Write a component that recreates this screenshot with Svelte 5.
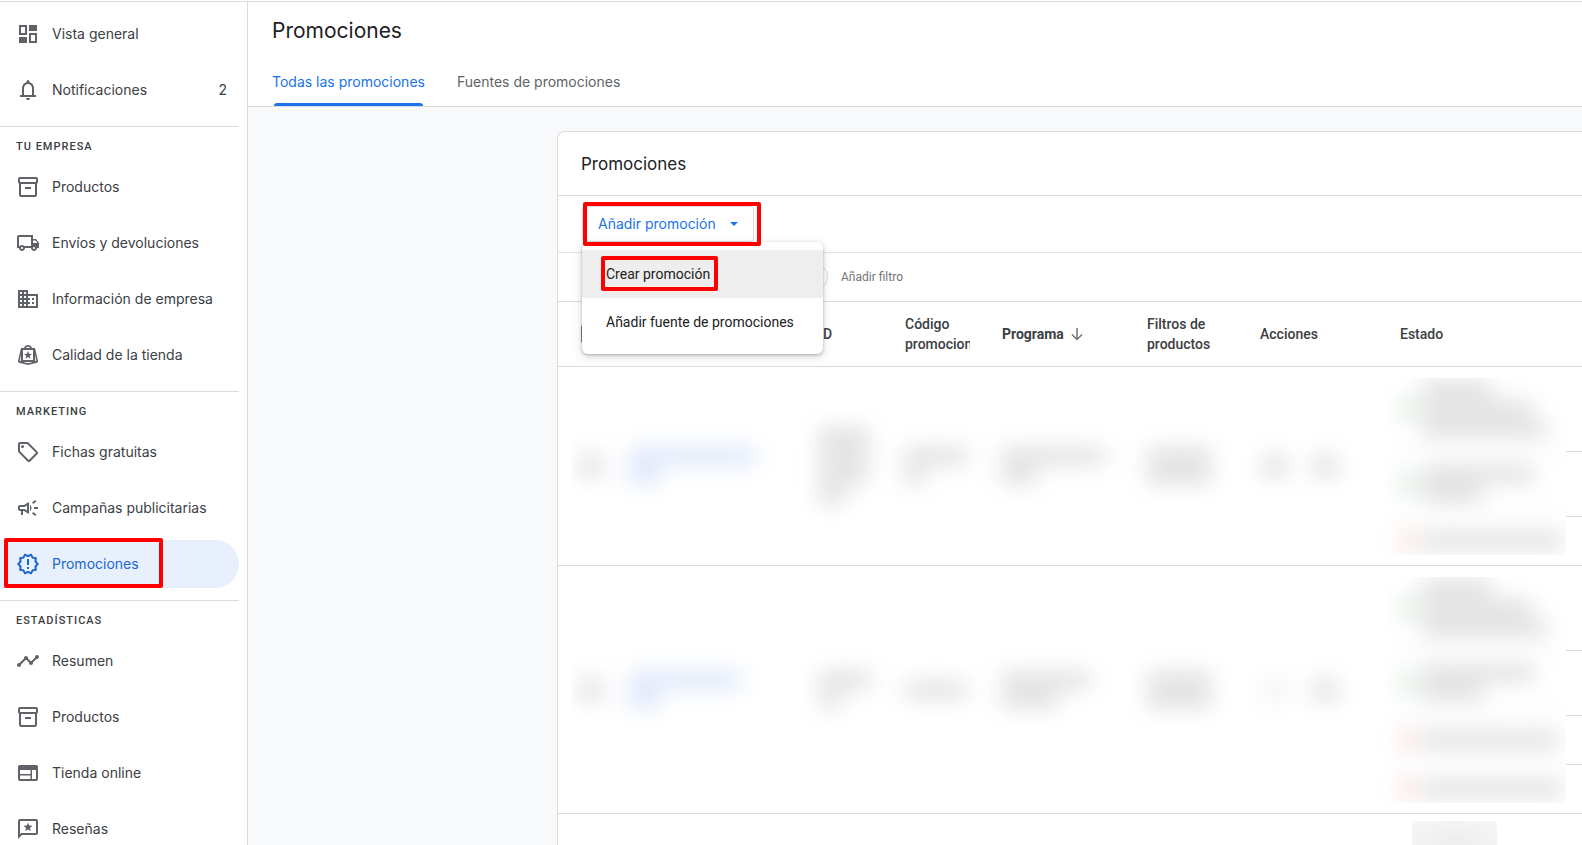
<script lang="ts">
	type NavItem = { icon: string; label: string; badge?: string; active?: boolean };
	type NavSection = { title?: string; items: NavItem[] };
	type Status = { tone: 'ok' | 'warn' | 'error'; lines: number[] };

	const icons: Record<string, string> = {
		dashboard: 'M3 3h8v10H3zM5 5v6h4V5zM13 3h8v6h-8zM3 15h8v6H3zM13 11h8v10h-8zM15 13v6h4v-6z',
		bell: 'M4 19v-2h2v-7q0-2.075 1.25-3.688T10.5 4.2v-.7q0-.625.438-1.063T12 2t1.063.438T13.5 3.5v.7q2 .5 3.25 2.113T18 10v7h2v2zm8 3q-.825 0-1.413-.588T10 20h4q0 .825-.588 1.413T12 22m-4-5h8v-7q0-1.65-1.175-2.825T12 6 9.175 7.175 8 10z',
		box: 'M20 2H4c-1 0-2 .9-2 2v3.01c0 .72.43 1.34 1 1.69V20c0 1.1 1.1 2 2 2h14c.9 0 2-.9 2-2V8.7c.57-.35 1-.97 1-1.69V4c0-1.1-1-2-2-2zm-1 18H5V9h14v11zm1-13H4V4h16v3zM9 12h6v2H9z',
		truck: 'M20 8h-3V4H3c-1.1 0-2 .9-2 2v11h2c0 1.66 1.34 3 3 3s3-1.34 3-3h6c0 1.66 1.34 3 3 3s3-1.34 3-3h2v-5l-3-4zM6 18c-.55 0-1-.45-1-1s.45-1 1-1 1 .45 1 1-.45 1-1 1zm9-3H8.22c-.55-.61-1.33-1-2.22-1s-1.67.39-2.22 1H3V6h12v9zm3 3c-.55 0-1-.45-1-1s.45-1 1-1 1 .45 1 1-.45 1-1 1zm-1-6V9.5h2.5l1.96 2.5H17z',
		building: 'M12 7V3H2v18h20V7H12zM6 19H4v-2h2v2zm0-4H4v-2h2v2zm0-4H4V9h2v2zm0-4H4V5h2v2zm4 12H8v-2h2v2zm0-4H8v-2h2v2zm0-4H8V9h2v2zm0-4H8V5h2v2zm10 12h-8v-2h2v-2h-2v-2h2v-2h-2V9h8v10zm-2-8h-2v2h2v-2zm0 4h-2v2h2v-2z',
		quality: 'M12 2a4 4 0 0 0-4 3H5L2 18q0 2 2 2l8 2 8-2q2 0 2-2L19 5h-3a4 4 0 0 0-4-3zm0 1.5a2 2 0 0 1 2 1.5h-4a2 2 0 0 1 2-1.5zM7 7h10v10H7zM12 8l1.1 2.7 2.9.2-2.2 1.9.7 2.9-2.5-1.6-2.5 1.6.7-2.9L8 10.9l2.9-.2zM5 11.5l-1.2 6.2 1.2.3zM19 11.5l1.2 6.2-1.2.3zM7 19h10l-5 1.3z',
		tag: 'M21.41 11.41l-8.83-8.83c-.37-.37-.88-.58-1.41-.58H4c-1.1 0-2 .9-2 2v7.17c0 .53.21 1.04.59 1.41l8.83 8.83c.78.78 2.05.78 2.83 0l7.17-7.17c.78-.78.78-2.04-.01-2.83zM12.83 20L4 11.17V4h7.17L20 12.83 12.83 20zM5 6.5a1.5 1.5 0 1 0 3 0a1.5 1.5 0 1 0-3 0z',
		campaign: 'M18 11v2h4v-2h-4zM16 17.61c.96.71 2.21 1.65 3.2 2.39.4-.53.8-1.07 1.2-1.6-.99-.74-2.24-1.68-3.2-2.4-.4.54-.8 1.08-1.2 1.61zM20.4 5.6c-.4-.53-.8-1.07-1.2-1.6-.99.74-2.24 1.68-3.2 2.4.4.53.8 1.07 1.2 1.6.96-.72 2.21-1.65 3.2-2.4zM4 9c-1.1 0-2 .9-2 2v2c0 1.1.9 2 2 2h1v4h2v-4h1l5 3V6L8 9H4zm5.03 1.71L11 9.53v4.94l-1.97-1.18-.48-.29H4v-2h4.55l.48-.29zM15.5 12c0-1.33-.58-2.53-1.5-3.35v6.69c.92-.81 1.5-2.01 1.5-3.34z',
		release: 'M23 12l-2.44-2.78.34-3.68-3.61-.82-1.89-3.18L12 3 8.6 1.54 6.71 4.72l-3.61.81.34 3.68L1 12l2.44 2.78-.34 3.69 3.61.82 1.89 3.18L12 21l3.4 1.46 1.89-3.18 3.61-.82-.34-3.68L23 12zm-4.51 2.11.26 2.79-2.74.62-1.43 2.41L12 18.82l-2.58 1.11-1.43-2.41-2.74-.62.26-2.8L3.66 12l1.85-2.12-.26-2.78 2.74-.61 1.43-2.41L12 5.18l2.58-1.11 1.43 2.41 2.74.62-.26 2.79L20.34 12l-1.85 2.11zM11 15h2v2h-2zm0-8h2v6h-2z',
		timeline: 'M23 8c0 1.1-.9 2-2 2-.18 0-.35-.02-.51-.07l-3.56 3.55c.05.16.07.34.07.52 0 1.1-.9 2-2 2s-2-.9-2-2c0-.18.02-.36.07-.52l-2.55-2.55c-.16.05-.34.07-.52.07s-.36-.02-.52-.07l-4.55 4.56c.05.16.07.33.07.51 0 1.1-.9 2-2 2s-2-.9-2-2 .9-2 2-2c.18 0 .35.02.51.07l4.56-4.55C8.02 9.36 8 9.18 8 9c0-1.1.9-2 2-2s2 .9 2 2c0 .18-.02.36-.07.52l2.55 2.55c.16-.05.34-.07.52-.07s.36.02.52.07l3.55-3.56C19.02 8.35 19 8.18 19 8c0-1.1.9-2 2-2s2 .9 2 2z',
		web: 'M20 4H4c-1.1 0-2 .9-2 2v12c0 1.1.9 2 2 2h16c1.1 0 2-.9 2-2V6c0-1.1-.9-2-2-2zM4 9h10.5v4H4zm0 5.5h10.5V18H4zM20 18h-4V9h4z',
		review: 'M20 2H4c-1.1 0-2 .9-2 2v18l4-4h14c1.1 0 2-.9 2-2V4c0-1.1-.9-2-2-2zm0 14H5.17L4 17.17V4h16v12zM12 5.5l1.2 3 3.3.3-2.5 2.1.8 3.2-2.8-1.7-2.8 1.7.8-3.2-2.5-2.1 3.3-.3z',
	};

	const sections: NavSection[] = [
		{
			items: [
				{ icon: 'dashboard', label: 'Vista general' },
				{ icon: 'bell', label: 'Notificaciones', badge: '2' },
			],
		},
		{
			title: 'Tu empresa',
			items: [
				{ icon: 'box', label: 'Productos' },
				{ icon: 'truck', label: 'Envíos y devoluciones' },
				{ icon: 'building', label: 'Información de empresa' },
				{ icon: 'quality', label: 'Calidad de la tienda' },
			],
		},
		{
			title: 'Marketing',
			items: [
				{ icon: 'tag', label: 'Fichas gratuitas' },
				{ icon: 'campaign', label: 'Campañas publicitarias' },
				{ icon: 'release', label: 'Promociones', active: true },
			],
		},
		{
			title: 'Estadísticas',
			items: [
				{ icon: 'timeline', label: 'Resumen' },
				{ icon: 'box', label: 'Productos' },
				{ icon: 'web', label: 'Tienda online' },
				{ icon: 'review', label: 'Reseñas' },
			],
		},
	];

	// Private data is never shown: each cell only knows how long its lines are
	const rows: { cells: number[][]; actions: string[]; statuses: Status[] }[] = [
		{
			cells: [[126, 30], [50, 50, 48, 26], [62, 20], [102, 34], [64, 64]],
			actions: ['strong', 'strong'],
			statuses: [
				{ tone: 'ok', lines: [70, 110, 124] },
				{ tone: 'ok', lines: [112, 60] },
				{ tone: 'warn', lines: [140] },
			],
		},
		{
			cells: [[112, 30], [52, 22], [62], [88, 56], [64, 64]],
			actions: ['faint', 'strong'],
			statuses: [
				{ tone: 'ok', lines: [70, 110, 124] },
				{ tone: 'ok', lines: [112, 60] },
				{ tone: 'error', lines: [136] },
				{ tone: 'error', lines: [140] },
			],
		},
	];

	let menuOpen = $state(true);
</script>

{#snippet icon(name: string)}
	<svg class="icon" viewBox="0 0 24 24" aria-hidden="true">
		<path fill-rule="evenodd" d={icons[name]} />
	</svg>
{/snippet}

{#snippet statusList(statuses: Status[])}
	{#each statuses as s}
		<div class="status">
			<b class={s.tone}></b>
			<div class="lines">{#each s.lines as w}<i style="width: {w}px"></i>{/each}</div>
		</div>
	{/each}
{/snippet}

<div class="app">
	<nav class="sidebar">
		{#each sections as section}
			<div class="section">
				{#if section.title}
					<h2 class="section-title">{section.title}</h2>
				{/if}
				{#each section.items as item}
					<a href="#top" class="nav-item" class:active={item.active}>
						{@render icon(item.icon)}
						<span class="nav-label">{item.label}</span>
						{#if item.badge}<span>{item.badge}</span>{/if}
						{#if item.active}<span class="mark mark-nav"></span>{/if}
					</a>
				{/each}
			</div>
		{/each}
	</nav>

	<main class="main">
		<header class="page-header">
			<h1>Promociones</h1>
			<div class="tabs" role="tablist">
				<button class="tab selected" role="tab" aria-selected="true">Todas las promociones</button>
				<button class="tab" role="tab" aria-selected="false">Fuentes de promociones</button>
			</div>
		</header>

		<section class="card">
			<h2 class="card-title">Promociones</h2>

			<div class="toolbar">
				<div class="dropdown">
					<button class="add" aria-expanded={menuOpen} onclick={() => (menuOpen = !menuOpen)}>
						Añadir promoción
						<span class="caret"></span>
					</button>
					{#if menuOpen}
						<div class="menu" role="menu">
							<button class="menu-item hovered" role="menuitem">
								<span class="marked">Crear promoción<span class="mark mark-item"></span></span>
							</button>
							<button class="menu-item" role="menuitem">Añadir fuente de promociones</button>
						</div>
					{/if}
					<span class="mark mark-add"></span>
				</div>
			</div>

			<div class="filters">
				<span class="chip"></span>
				<input class="filter-input" type="text" placeholder="Añadir filtro" aria-label="Añadir filtro" />
			</div>

			<table>
				<colgroup>
					<col class="c-check" /><col class="c-name" /><col class="c-id" /><col class="c-code" />
					<col class="c-program" /><col class="c-filters" /><col class="c-actions" /><col />
				</colgroup>
				<thead>
					<tr>
						<th><input type="checkbox" aria-label="Seleccionar todo" /></th>
						<td></td>
						<th>ID</th>
						<th><div class="clip">Código promocional</div></th>
						<th class="sorted">
							<span class="sort">
								Programa
								<svg class="arrow" viewBox="0 0 14 14" aria-hidden="true"><path d="M7 1v11M2 7.5l5 5 5-5" /></svg>
							</span>
						</th>
						<th>Filtros de productos</th>
						<th>Acciones</th>
						<th>Estado</th>
					</tr>
				</thead>
				<tbody>
					{#each rows as row}
						<tr>
							<td><div class="check-clip"><div class="hidden-box"></div></div></td>
							{#each row.cells as lines, i}
								<td>
									<div class="redacted lines" class:link={i === 0}>
										{#each lines as w}<i style="width: {w}px"></i>{/each}
									</div>
								</td>
							{/each}
							<td>
								<div class="hidden-actions">
									{#each row.actions as a}<div class="hidden-box {a}"></div>{/each}
								</div>
							</td>
							<td>
								<div class="statuses">
									{@render statusList(row.statuses)}
									<!-- opaque patch with a blurred copy of the list -->
									<div class="patch" aria-hidden="true">
										<div class="patch-inner">{@render statusList(row.statuses)}</div>
									</div>
								</div>
							</td>
						</tr>
					{/each}
					<tr>
						<td colspan="7"></td>
						<td><div class="partial"></div></td>
					</tr>
				</tbody>
			</table>
		</section>
	</main>
</div>

<style>
	:global(body) {
		margin: 0;
	}

	.app {
		--line: #dadce0;
		--blue: #1a73e8;
		display: flex;
		box-sizing: border-box;
		height: 100vh;
		padding-top: 1px;
		overflow: hidden;
		background: #fff;
		color: #3c4043;
		font-family: Roboto, sans-serif;
		font-size: 14px;
		line-height: 20px;
	}

	button,
	input {
		font: inherit;
	}

	h1,
	h2 {
		margin: 0;
		font-weight: 400;
	}

	/* --- Sidebar --- */
	.sidebar {
		flex: none;
		box-sizing: border-box;
		width: 248px;
		padding-top: 8px;
		overflow: hidden;
		border-top: 1px solid var(--line);
		border-right: 1px solid var(--line);
		font-family: Inter, sans-serif;
	}

	.section {
		display: flex;
		flex-direction: column;
		gap: 8px;
		margin-right: 8px;
	}

	.section + .section {
		margin-top: 12px;
		border-top: 1px solid var(--line);
	}

	.section-title {
		margin-bottom: -8px;
		padding: 4px 0 0 16px;
		font-family: Roboto, sans-serif;
		font-size: 11px;
		font-weight: 500;
		line-height: 32px;
		letter-spacing: 1px;
		text-transform: uppercase;
	}

	.nav-item {
		position: relative;
		display: flex;
		align-items: center;
		gap: 12px;
		height: 48px;
		padding: 0 12px 0 16px;
		border-radius: 0 24px 24px 0;
		color: inherit;
		text-decoration: none;
	}

	.nav-item.active {
		background: #e8f0fe;
		color: #1967d2;
	}

	.nav-label {
		flex: 1;
	}

	.icon {
		width: 24px;
		height: 24px;
		fill: #5f6368;
	}

	.active .icon {
		fill: #1967d2;
	}

	/* --- Red marks --- */
	.mark {
		position: absolute;
		border: 4px solid #f00;
		border-radius: 2px;
		pointer-events: none;
	}

	.mark-nav {
		inset: -2px 76px 0 4px;
	}

	.mark-add {
		inset: -4px -7px -4px 1px;
		z-index: 3;
	}

	.mark-item {
		inset: -10px -8px -9px -5px;
	}

	.marked {
		position: relative;
	}

	/* --- Main --- */
	.main {
		flex: 1;
		min-width: 0;
		overflow: hidden;
		border-top: 1px solid var(--line);
		background: #f8f9fb;
	}

	.page-header {
		padding: 15px 24px 0;
		border-bottom: 1px solid var(--line);
		background: #fff;
		font-family: Inter, sans-serif;
	}

	h1 {
		color: #202124;
		font-size: 21px;
		line-height: 28px;
	}

	.tabs {
		display: flex;
		gap: 32px;
		margin-top: 13px;
	}

	.tab {
		position: relative;
		height: 48px;
		padding: 0;
		border: 0;
		background: none;
		color: #5f6368;
	}

	.tab.selected {
		color: var(--blue);
	}

	.tab.selected::after {
		content: '';
		position: absolute;
		inset: auto 2px 0;
		height: 3px;
		border-radius: 3px 3px 0 0;
		background: var(--blue);
	}

	.card {
		margin: 24px 0 0 309px;
		border: 1px solid var(--line);
		border-width: 1px 0 0 1px;
		border-radius: 8px 0 0 0;
		background: #fff;
	}

	.card-title {
		padding: 1px 0 0 23px;
		border-bottom: 1px solid var(--line);
		color: #202124;
		font-family: Inter, sans-serif;
		font-size: 17px;
		line-height: 62px;
	}

	.toolbar {
		display: flex;
		padding: 10px 24px;
		border-bottom: 1px solid #e4e5e7;
	}

	.dropdown {
		position: relative;
	}

	.add {
		display: flex;
		align-items: center;
		gap: 14px;
		height: 36px;
		padding: 0 15px;
		border: 1px solid var(--line);
		border-radius: 4px;
		background: #fff;
		color: var(--blue);
		font-family: Inter, sans-serif;
	}

	.caret {
		border: 4px solid transparent;
		border-top-color: var(--blue);
		border-bottom: 0;
	}

	.menu {
		position: absolute;
		top: 100%;
		left: 0;
		z-index: 2;
		display: flex;
		flex-direction: column;
		width: 241px;
		padding: 8px 0;
		border-radius: 6px;
		background: #fff;
		box-shadow: 0 1px 3px rgba(60, 64, 67, 0.35), 0 3px 8px 1px rgba(60, 64, 67, 0.15);
	}

	.menu-item {
		height: 48px;
		padding: 0 24px;
		border: 0;
		background: none;
		color: #212121;
		text-align: left;
	}

	.menu-item.hovered {
		background: #eee;
	}

	.filters {
		display: flex;
		align-items: center;
		gap: 13px;
		height: 48px;
		padding-left: 24px;
		border-bottom: 1px solid var(--line);
	}

	.chip {
		box-sizing: border-box;
		width: 246px;
		height: 28px;
		border: 1px solid var(--line);
		border-radius: 14px;
	}

	.filter-input {
		flex: 1;
		padding: 0;
		border: 0;
		outline: 0;
		font-size: 12px;
	}

	.filter-input::placeholder {
		color: #757575;
	}

	/* --- Table --- */
	table {
		width: 100%;
		table-layout: fixed;
		border-collapse: separate;
		border-spacing: 0;
	}

	.c-check { width: 71px; }
	.c-name { width: 190px; }
	.c-id { width: 86px; }
	.c-code { width: 97px; }
	.c-program { width: 145px; }
	.c-filters { width: 113px; }
	.c-actions { width: 140px; }

	th,
	td {
		padding: 0;
		border-bottom: 1px solid var(--line);
		text-align: left;
		vertical-align: middle;
	}

	th {
		height: 64px;
		padding-right: 31px;
		font-weight: 500;
	}

	th:first-child {
		padding-right: 0;
	}

	th input {
		display: block;
		width: 18px;
		height: 18px;
		margin: 0 0 0 23px;
		border: 2px solid #757575;
		border-radius: 2px;
		appearance: none;
	}

	.clip {
		width: 65px;
		overflow: hidden;
	}

	.sorted {
		padding-right: 0;
		font-weight: 700;
	}

	.sort {
		display: flex;
		align-items: center;
		gap: 6px;
	}

	.arrow {
		width: 14px;
		height: 14px;
		fill: none;
		stroke: #757575;
		stroke-width: 1.5;
	}

	/* --- Blurred content --- */
	.lines {
		display: flex;
		flex-direction: column;
	}

	.redacted,
	.hidden-box,
	.patch-inner {
		filter: blur(11px);
	}

	i {
		height: 12px;
		margin: 4px 0;
		background: #d2d3d3;
	}

	.link i {
		background: #cddcfa;
	}

	.check-clip {
		margin-left: 14px;
		padding: 40px 8px;
		overflow: hidden;
	}

	.hidden-box {
		width: 22px;
		height: 22px;
		background: #dedede;
	}

	.hidden-box.faint {
		background: #f2f2f2;
	}

	.hidden-actions {
		display: flex;
		gap: 28px;
		padding-left: 4px;
	}

	.statuses {
		position: relative;
	}

	.status {
		display: flex;
		align-items: center;
		gap: 8px;
		min-height: 48px;
	}

	.status:has(i + i) {
		padding: 12px 0;
		min-height: 40px;
	}

	.status + .status {
		border-top: 1px solid var(--line);
	}

	.status b {
		width: 14px;
		height: 20px;
		background: #d3ecd8;
	}

	.status b.warn {
		background: #fbdfd0;
	}

	.status b.error {
		background: #fbdad8;
	}

	.patch {
		position: absolute;
		inset: 11px 16px 10px -27px;
		overflow: hidden;
		background: #fff;
	}

	.patch-inner {
		margin: -11px 0 0 27px;
	}

	.partial {
		width: 85px;
		height: 40px;
		margin: 7px 0 0 12px;
		background: radial-gradient(#ededed, #f7f7f7);
	}
</style>
